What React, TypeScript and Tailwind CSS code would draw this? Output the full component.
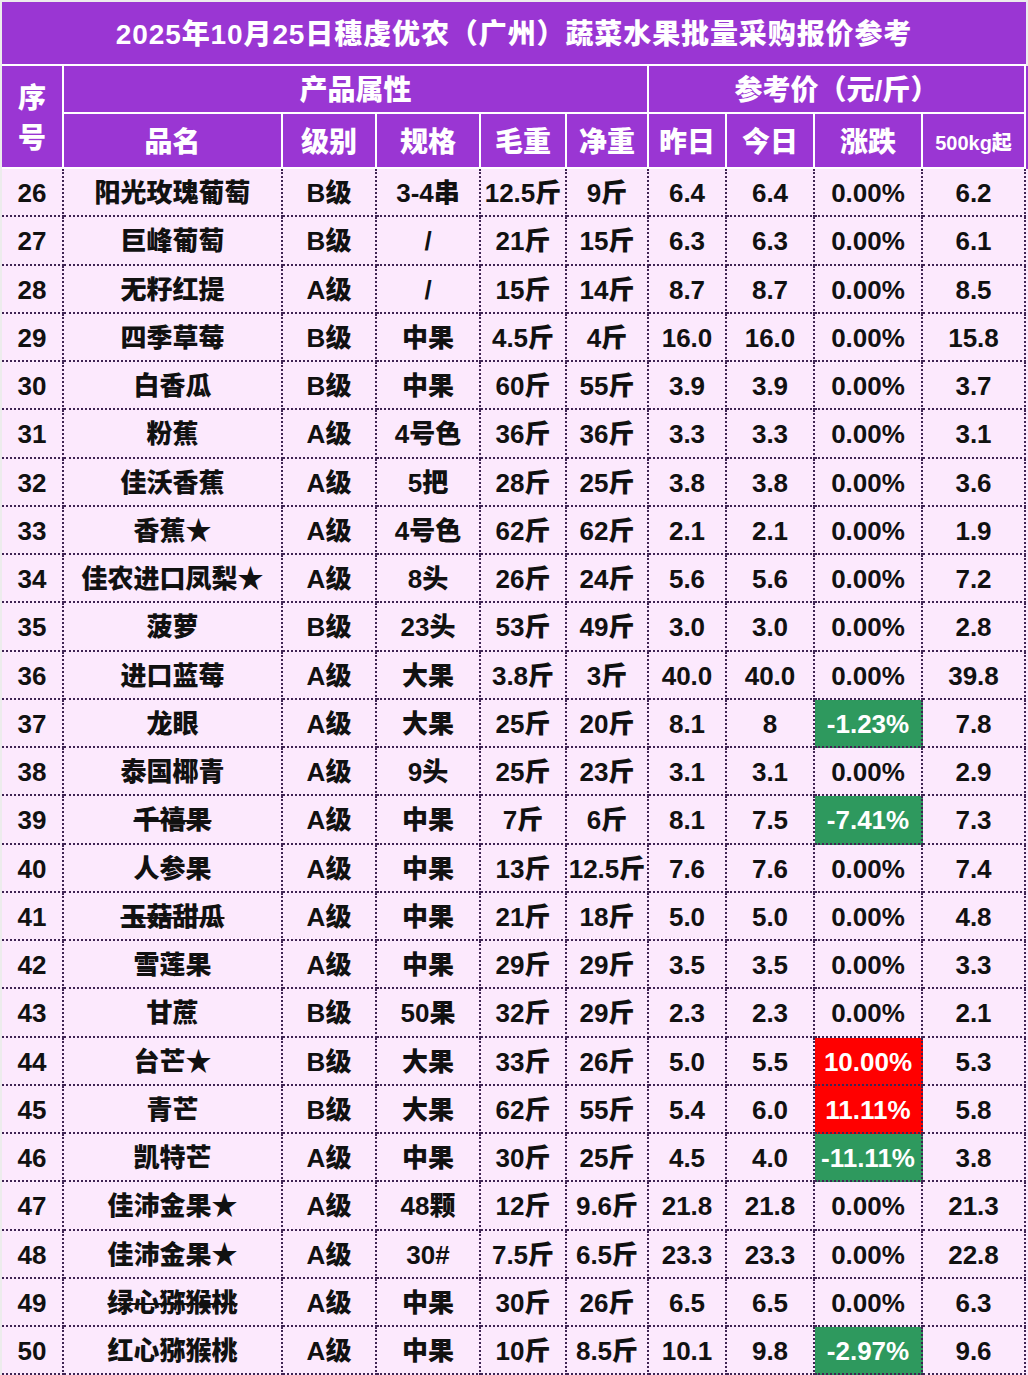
import React from 'react';

type Row = {
  no: number;
  name: string;
  grade: string;
  spec: string;
  gross: string;
  net: string;
  yesterday: string;
  today: string;
  change: string;
  bulk: string;
  strike?: boolean;
};

const rows: Row[] = [
  { no: 26, name: '阳光玫瑰葡萄', grade: 'B级', spec: '3-4串', gross: '12.5斤', net: '9斤', yesterday: '6.4', today: '6.4', change: '0.00%', bulk: '6.2' },
  { no: 27, name: '巨峰葡萄', grade: 'B级', spec: '/', gross: '21斤', net: '15斤', yesterday: '6.3', today: '6.3', change: '0.00%', bulk: '6.1' },
  { no: 28, name: '无籽红提', grade: 'A级', spec: '/', gross: '15斤', net: '14斤', yesterday: '8.7', today: '8.7', change: '0.00%', bulk: '8.5' },
  { no: 29, name: '四季草莓', grade: 'B级', spec: '中果', gross: '4.5斤', net: '4斤', yesterday: '16.0', today: '16.0', change: '0.00%', bulk: '15.8' },
  { no: 30, name: '白香瓜', grade: 'B级', spec: '中果', gross: '60斤', net: '55斤', yesterday: '3.9', today: '3.9', change: '0.00%', bulk: '3.7' },
  { no: 31, name: '粉蕉', grade: 'A级', spec: '4号色', gross: '36斤', net: '36斤', yesterday: '3.3', today: '3.3', change: '0.00%', bulk: '3.1' },
  { no: 32, name: '佳沃香蕉', grade: 'A级', spec: '5把', gross: '28斤', net: '25斤', yesterday: '3.8', today: '3.8', change: '0.00%', bulk: '3.6' },
  { no: 33, name: '香蕉★', grade: 'A级', spec: '4号色', gross: '62斤', net: '62斤', yesterday: '2.1', today: '2.1', change: '0.00%', bulk: '1.9' },
  { no: 34, name: '佳农进口凤梨★', grade: 'A级', spec: '8头', gross: '26斤', net: '24斤', yesterday: '5.6', today: '5.6', change: '0.00%', bulk: '7.2' },
  { no: 35, name: '菠萝', grade: 'B级', spec: '23头', gross: '53斤', net: '49斤', yesterday: '3.0', today: '3.0', change: '0.00%', bulk: '2.8' },
  { no: 36, name: '进口蓝莓', grade: 'A级', spec: '大果', gross: '3.8斤', net: '3斤', yesterday: '40.0', today: '40.0', change: '0.00%', bulk: '39.8' },
  { no: 37, name: '龙眼', grade: 'A级', spec: '大果', gross: '25斤', net: '20斤', yesterday: '8.1', today: '8', change: '-1.23%', bulk: '7.8' },
  { no: 38, name: '泰国椰青', grade: 'A级', spec: '9头', gross: '25斤', net: '23斤', yesterday: '3.1', today: '3.1', change: '0.00%', bulk: '2.9' },
  { no: 39, name: '千禧果', grade: 'A级', spec: '中果', gross: '7斤', net: '6斤', yesterday: '8.1', today: '7.5', change: '-7.41%', bulk: '7.3', strike: true },
  { no: 40, name: '人参果', grade: 'A级', spec: '中果', gross: '13斤', net: '12.5斤', yesterday: '7.6', today: '7.6', change: '0.00%', bulk: '7.4' },
  { no: 41, name: '玉菇甜瓜', grade: 'A级', spec: '中果', gross: '21斤', net: '18斤', yesterday: '5.0', today: '5.0', change: '0.00%', bulk: '4.8', strike: true },
  { no: 42, name: '雪莲果', grade: 'A级', spec: '中果', gross: '29斤', net: '29斤', yesterday: '3.5', today: '3.5', change: '0.00%', bulk: '3.3' },
  { no: 43, name: '甘蔗', grade: 'B级', spec: '50果', gross: '32斤', net: '29斤', yesterday: '2.3', today: '2.3', change: '0.00%', bulk: '2.1' },
  { no: 44, name: '台芒★', grade: 'B级', spec: '大果', gross: '33斤', net: '26斤', yesterday: '5.0', today: '5.5', change: '10.00%', bulk: '5.3' },
  { no: 45, name: '青芒', grade: 'B级', spec: '大果', gross: '62斤', net: '55斤', yesterday: '5.4', today: '6.0', change: '11.11%', bulk: '5.8' },
  { no: 46, name: '凯特芒', grade: 'A级', spec: '中果', gross: '30斤', net: '25斤', yesterday: '4.5', today: '4.0', change: '-11.11%', bulk: '3.8' },
  { no: 47, name: '佳沛金果★', grade: 'A级', spec: '48颗', gross: '12斤', net: '9.6斤', yesterday: '21.8', today: '21.8', change: '0.00%', bulk: '21.3' },
  { no: 48, name: '佳沛金果★', grade: 'A级', spec: '30#', gross: '7.5斤', net: '6.5斤', yesterday: '23.3', today: '23.3', change: '0.00%', bulk: '22.8' },
  { no: 49, name: '绿心猕猴桃', grade: 'A级', spec: '中果', gross: '30斤', net: '26斤', yesterday: '6.5', today: '6.5', change: '0.00%', bulk: '6.3', strike: true },
  { no: 50, name: '红心猕猴桃', grade: 'A级', spec: '中果', gross: '10斤', net: '8.5斤', yesterday: '10.1', today: '9.8', change: '-2.97%', bulk: '9.6' },
];

// 62 | 219 | 94 | 104 | 86 | 82 | 78 | 88 | 108 | 103
const cols = 'grid grid-cols-[62px_219px_94px_104px_86px_82px_78px_88px_108px_103px]';

const cell =
  'flex items-center justify-center pt-[3px] border-r-2 border-b-2 border-dotted border-[#3f2453] whitespace-nowrap';

function changeClass(v: string) {
  if (v.startsWith('-')) return 'bg-[#2e995e] text-white';
  if (v !== '0.00%') return 'bg-[#ff0000] text-white';
  return '';
}

function HeadCell({ children, className = '' }: { children: React.ReactNode; className?: string }) {
  return (
    <div className={`flex items-center justify-center pt-[4px] border-r-2 border-b-2 border-white text-white ${className}`}>
      {children}
    </div>
  );
}

export default function App() {
  return (
    <div
      className="w-[1028px] h-[1375px] overflow-hidden bg-[#ececec] pt-[2px] pl-[2px] font-black"
      style={{ fontFamily: '"Liberation Sans", "Noto Sans CJK SC", sans-serif' }}
    >
      <div className="w-[1026px]">
        {/* title bar */}
        <div className="h-[64px] w-[1024px] bg-[#9a36d3] border-b-2 border-white flex items-center justify-center text-white text-[28px] tracking-[0.9px] pt-[4px]">
          2025年10月25日穗虔优农（广州）蔬菜水果批量采购报价参考
        </div>

        {/* header rows */}
        <div className={`${cols} grid-rows-[48px_55px] bg-[#9a36d3] text-[28px]`}>
          <HeadCell className="row-span-2 flex-col leading-[40px]">
            <span>序</span>
            <span>号</span>
          </HeadCell>
          <HeadCell className="col-span-5">产品属性</HeadCell>
          <HeadCell className="col-span-4 border-r-0">参考价（元/斤）</HeadCell>
          <HeadCell>品名</HeadCell>
          <HeadCell>级别</HeadCell>
          <HeadCell>规格</HeadCell>
          <HeadCell>毛重</HeadCell>
          <HeadCell>净重</HeadCell>
          <HeadCell>昨日</HeadCell>
          <HeadCell>今日</HeadCell>
          <HeadCell>涨跌</HeadCell>
          <HeadCell className="text-[20px] border-r-0">500kg起</HeadCell>
        </div>

        {/* data rows */}
        <div className="bg-[#fce9fd] text-[#111] text-[26px]">
          {rows.map((r) => (
            <div key={r.no} className={`${cols} h-[48.25px]`}>
              <div className={cell}>{r.no}</div>
              <div className={cell}>
                <span className={r.strike ? 'line-through decoration-[2px]' : ''}>{r.name}</span>
              </div>
              <div className={cell}>{r.grade}</div>
              <div className={cell}>{r.spec}</div>
              <div className={cell}>{r.gross}</div>
              <div className={cell}>{r.net}</div>
              <div className={cell}>{r.yesterday}</div>
              <div className={cell}>{r.today}</div>
              <div className={`${cell} ${changeClass(r.change)}`}>{r.change}</div>
              <div className={cell}>{r.bulk}</div>
            </div>
          ))}
        </div>
      </div>
    </div>
  );
}
